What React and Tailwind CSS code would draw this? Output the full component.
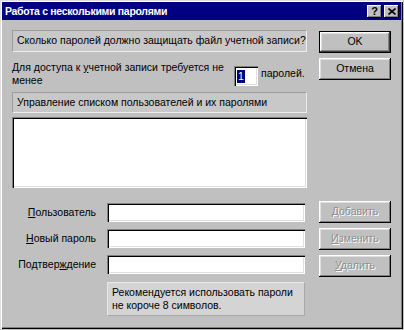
import React from "react";

const font = { fontFamily: '"Liberation Sans", Arial, sans-serif' };

function Btn({ children, def, disabled }) {
  return (
    <div
      className={
        "h-[22px] w-[72px] flex items-center justify-center text-[10.5px] bg-[#c0c0c0] " +
        (def
          ? "border border-black shadow-[inset_-1px_-1px_0_#404040,inset_1px_1px_0_#fff,inset_-2px_-2px_0_#808080,inset_2px_2px_0_#dfdfdf]"
          : "shadow-[inset_-1px_-1px_0_#000,inset_1px_1px_0_#fff,inset_-2px_-2px_0_#808080,inset_2px_2px_0_#dfdfdf]") +
        (disabled ? " text-[#8e8e8e] [text-shadow:1px_1px_0_#fff]" : " text-black")
      }
    >
      {children}
    </div>
  );
}

function Field() {
  return (
    <div className="h-[19px] w-[198px] bg-white shadow-[inset_1px_1px_0_#808080,inset_2px_2px_0_#000,inset_-1px_-1px_0_#fff,inset_-2px_-2px_0_#dfdfdf]" />
  );
}

export default function App() {
  return (
    <div className="w-[404px] h-[330px] bg-[#c0c0c0]" style={font}>
      <div className="w-[403px] h-[329px] flex flex-col bg-[#c0c0c0] shadow-[inset_1px_1px_0_#dfdfdf,inset_2px_2px_0_#fff,inset_-1px_-1px_0_#000,inset_-2px_-2px_0_#808080]">
        {/* title bar */}
        <div className="mx-[2px] mt-[2px] h-[18px] bg-[#000080] flex items-center pl-[3px] pr-[2px]">
          <span className="text-white font-bold text-[10.5px] tracking-[-0.3px] leading-none">
            Работа с несколькими паролями
          </span>
          <div className="ml-auto flex gap-[2px]">
            <div className="w-[15px] h-[13px] bg-[#c0c0c0] flex items-center justify-center text-[11px] font-bold leading-none text-black shadow-[inset_-1px_-1px_0_#000,inset_1px_1px_0_#fff,inset_-2px_-2px_0_#808080]">
              ?
            </div>
            <div className="w-[15px] h-[13px] bg-[#c0c0c0] flex items-center justify-center shadow-[inset_-1px_-1px_0_#000,inset_1px_1px_0_#fff,inset_-2px_-2px_0_#808080]">
              <svg width="8" height="7" viewBox="0 0 8 7">
                <path d="M0.5 0.5 L7.5 6.5 M7.5 0.5 L0.5 6.5" stroke="#000" strokeWidth="1.6" />
              </svg>
            </div>
          </div>
        </div>

        <div className="text-[10.5px] text-black">
          {/* top section */}
          <div className="flex pl-[12px] mt-[10px]">
            <div className="w-[295px] flex flex-col">
              <div className="h-[22px] flex items-center pl-[4px] whitespace-nowrap bg-[#c8c8c8] border border-t-[#9c9c9c] border-l-[#9c9c9c] border-b-[#ececec] border-r-[#ececec]">
                Сколько паролей должно защищать файл учетной записи?
              </div>
              <div className="mt-[9px] h-[26px] flex">
                <div className="w-[222px] leading-[13px] whitespace-nowrap">
                  Для доступа к <span className="underline">у</span>четной записи требуется не
                  <br />
                  менее
                </div>
                <div className="mt-[5px] h-[20px] w-[24px] bg-white flex items-center pl-[3px] shadow-[inset_1px_1px_0_#808080,inset_2px_2px_0_#000,inset_-1px_-1px_0_#fff,inset_-2px_-2px_0_#dfdfdf]">
                  <span className="bg-[#000080] text-white leading-[13px] px-[1px]">1</span>
                </div>
                <div className="ml-[3px] mt-[6px] leading-[13px]">паролей.</div>
              </div>
              <div className="mt-[5px] h-[21px] flex items-center pl-[4px] whitespace-nowrap bg-[#c8c8c8] border border-t-[#9c9c9c] border-l-[#9c9c9c] border-b-[#ececec] border-r-[#ececec]">
                Управление списком пользователей и их паролями
              </div>
              <div className="mt-[4px] h-[71px] bg-white shadow-[inset_1px_1px_0_#808080,inset_2px_2px_0_#000,inset_-1px_-1px_0_#fff,inset_-2px_-2px_0_#dfdfdf]" />
            </div>
            <div className="ml-[12px] mt-[1px] flex flex-col gap-[5px]">
              <Btn def>OK</Btn>
              <Btn>Отмена</Btn>
            </div>
          </div>

          {/* bottom section */}
          <div className="flex pl-[12px] mt-[13px]">
            <div className="w-[295px] flex flex-col mt-[2px]">
              <div className="flex flex-col gap-[7px]">
                <div className="flex items-center">
                  <div className="w-[84px] text-right">
                    <span className="underline">П</span>ользователь
                  </div>
                  <div className="ml-[11px]"><Field /></div>
                </div>
                <div className="flex items-center">
                  <div className="w-[84px] text-right">
                    <span className="underline">Н</span>овый пароль
                  </div>
                  <div className="ml-[11px]"><Field /></div>
                </div>
                <div className="flex items-center">
                  <div className="w-[84px] text-right">
                    Подтвер<span className="underline">ж</span>дение
                  </div>
                  <div className="ml-[11px]"><Field /></div>
                </div>
              </div>
              <div className="ml-[95px] mt-[8px] w-[198px] h-[34px] bg-[#d4d4d4] border border-t-[#e8e8e8] border-l-[#e8e8e8] border-b-[#a8a8a8] border-r-[#a8a8a8] pl-[4px] pt-[3px] leading-[13px] whitespace-nowrap">
                Рекомендуется использовать пароли
                <br />
                не короче 8 символов.
              </div>
            </div>
            <div className="ml-[12px] flex flex-col gap-[5px]">
              <Btn disabled><span><span className="underline">Д</span>обавить</span></Btn>
              <Btn disabled><span><span className="underline">И</span>зменить</span></Btn>
              <Btn disabled><span><span className="underline">У</span>далить</span></Btn>
            </div>
          </div>
        </div>
      </div>
    </div>
  );
}
